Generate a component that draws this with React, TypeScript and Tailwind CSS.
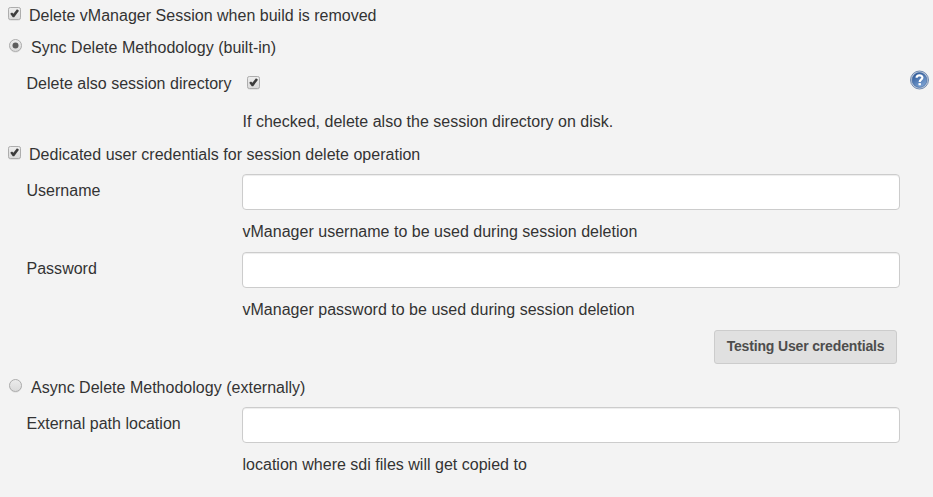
import React from "react";

function Check() {
  return (
    <svg width="13" height="14" viewBox="0 0 13 14" className="block shrink-0" role="checkbox" aria-checked="true">
      <defs>
        <linearGradient id="checkFill" x1="0" y1="0" x2="0" y2="1">
          <stop offset="0" stopColor="#eeeeee" />
          <stop offset="1" stopColor="#dadada" />
        </linearGradient>
      </defs>
      <rect x="0.5" y="1.2" width="12" height="12" rx="2" fill="none" stroke="#dcdcdc" />
      <rect x="0.5" y="0.5" width="12" height="12" rx="1.8" fill="url(#checkFill)" stroke="#adadad" />
      <path d="M2.2 6.7 L4 5.4 L5.4 6.8 L9 2.2 L11 3.7 L6.2 10.2 L4.8 10.2 Z" fill="#3c3c3c" />
    </svg>
  );
}

function Radio({ on }: { on?: boolean }) {
  return (
    <svg width="13" height="14" viewBox="0 0 13 14" className="block shrink-0" role="radio" aria-checked={!!on}>
      <defs>
        <linearGradient id="radioFill" x1="0" y1="0" x2="0" y2="1">
          <stop offset="0" stopColor="#ececec" />
          <stop offset="1" stopColor="#dadada" />
        </linearGradient>
      </defs>
      <circle cx="6.5" cy="7.2" r="6" fill="none" stroke="#dcdcdc" />
      <circle cx="6.5" cy="6.5" r="6" fill="url(#radioFill)" stroke="#adadad" />
      {on && <circle cx="6.5" cy="6.5" r="3" fill="#5c5c5c" />}
    </svg>
  );
}

function Help() {
  return (
    <svg width="20" height="20" viewBox="0 0 20 20" className="block shrink-0">
      <defs>
        <linearGradient id="helpFill" x1="0" y1="0" x2="0.6" y2="1">
          <stop offset="0" stopColor="#244f91" />
          <stop offset="1" stopColor="#7ba2d3" />
        </linearGradient>
      </defs>
      <circle cx="10.5" cy="10" r="9" fill="#c3cddd" stroke="#6380aa" strokeWidth="0.9" />
      <circle cx="10.5" cy="10" r="7.4" fill="url(#helpFill)" stroke="#3c639b" strokeWidth="0.6" />
      <path d="M7.6 7.8 C7.6 4.5 13.4 4.5 13.4 7.6 C13.4 9.7 10.7 9.7 10.7 12" fill="none" stroke="#fff" strokeWidth="2.2" />
      <rect x="9.5" y="13.1" width="2.4" height="2.2" fill="#fff" />
    </svg>
  );
}

function Field({ label }: { label: string }) {
  return (
    <div className="flex h-9 pl-[26.5px]">
      <label className="w-[215.5px] pt-[7px]">{label}</label>
      <input aria-label={label} className="h-9 w-[658px] rounded-[4px] border border-[#ccc] bg-white px-3 shadow-[inset_0_1px_1px_rgba(0,0,0,0.075)] outline-none" />
    </div>
  );
}

export default function App() {
  return (
    <main className="h-[497px] w-[933px] overflow-hidden bg-[#f3f3f3] font-['Liberation_Sans',Arial,sans-serif] text-[16px] leading-[20px] tracking-[0.015px] text-[#333]">
      <div className="flex pl-2 pt-[6px]"><div className="mr-2 pt-[1px]"><Check /></div>Delete vManager Session when build is removed</div>
      <div className="mt-3 flex pl-[9px]"><div className="mr-[9px] pt-[1px]"><Radio on /></div>Sync Delete Methodology (built-in)</div>
      <div className="mt-[12px] flex h-[20px] pl-[26.5px]">
        <span className="w-[220.5px] pt-[4px]">Delete also session directory</span>
        <div className="pt-[6px]"><Check /></div>
        <div className="ml-auto mr-[4px]"><Help /></div>
      </div>
      <p className="mt-[22px] pl-[242.5px]">If checked, delete also the session directory on disk.</p>
      <div className="mt-[13px] flex pl-2"><div className="mr-2 pt-[1px]"><Check /></div>Dedicated user credentials for session delete operation</div>
      <div className="mt-[9px]"><Field label="Username" /></div>
      <p className="mt-[12px] pl-[242.5px]">vManager username to be used during session deletion</p>
      <div className="mt-[10px]"><Field label="Password" /></div>
      <p className="mt-[12px] pl-[242.5px]">vManager password to be used during session deletion</p>
      <div className="mt-[10px] flex justify-end pr-9">
        <button className="h-[34px] w-[183px] rounded-[3px] border border-[#ccc] bg-[#e0e0e0] pb-[2px] text-[14px] font-bold tracking-[-0.16px] text-[#4d4d4d]">Testing User credentials</button>
      </div>
      <div className="mt-[14px] flex pl-[9px]"><div className="mr-[9px] pt-[1px]"><Radio /></div>Async Delete Methodology (externally)</div>
      <div className="mt-[9px]"><Field label="External path location" /></div>
      <p className="mt-[12px] pl-[242.5px]">location where sdi files will get copied to</p>
    </main>
  );
}
